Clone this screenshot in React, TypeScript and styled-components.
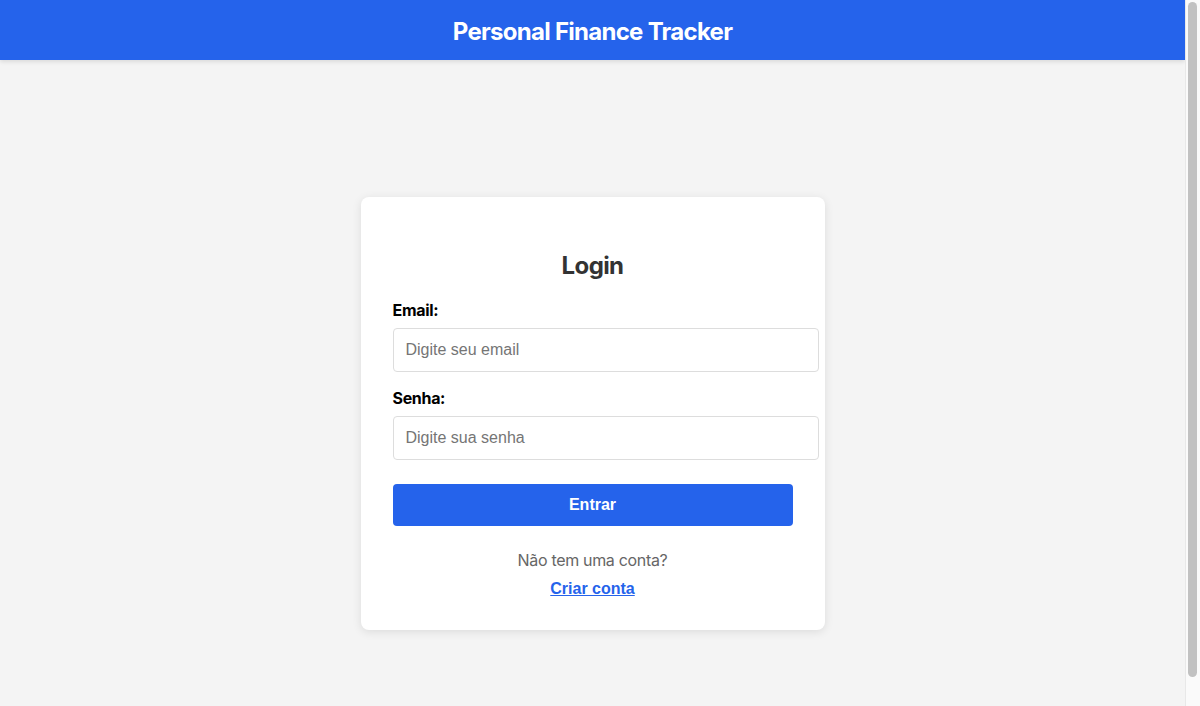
import styled, { createGlobalStyle } from 'styled-components'

const GlobalStyle = createGlobalStyle`
  body {
    margin: 0;
    background: #f4f4f4;
    font-family: Inter, "Noto Sans", sans-serif;
    letter-spacing: -0.02em;
  }
`

// the page is laid out beside a classic 15px scrollbar, as in the capture
const Page = styled.div`
  margin-right: 15px;
`

const ScrollTrack = styled.div`
  position: fixed;
  top: 0;
  right: 0;
  bottom: 0;
  width: 15px;
  box-sizing: border-box;
  background: #fafafa;
  border-left: 1px solid #e8e8e8;
  z-index: 20;
`

const ScrollThumb = styled.div`
  position: absolute;
  top: 2px;
  left: 2px;
  width: 9px;
  height: 675px;
  border-radius: 5px;
  background: #c1c1c1;
`

const Header = styled.header`
  background: #2563eb;
  color: #fff;
  padding: 17px 0 14px;
  text-align: center;
  box-shadow: 0 2px 4px rgba(0, 0, 0, 0.1);

  h1 {
    margin: 0;
    font-size: 24px;
    font-weight: 700;
    letter-spacing: -0.03em;
  }
`

const Main = styled.main`
  min-height: 100vh;
  display: flex;
  align-items: center;
  justify-content: center;
`

const Card = styled.div`
  width: 400px;
  padding: 32px;
  background: #fff;
  border-radius: 8px;
  box-shadow: 0 2px 10px rgba(0, 0, 0, 0.1);

  h2 {
    margin: 22px 0 20px;
    text-align: center;
    color: #333;
    font-size: 24px;
    letter-spacing: -0.025em;
  }
`

const Field = styled.div`
  margin-bottom: 16px;
`

const Label = styled.label`
  display: block;
  margin-bottom: 8px;
  font-weight: 700;
  color: #000;
`

const Input = styled.input`
  width: 100%;
  padding: 12px;
  border: 1px solid #ddd;
  border-radius: 4px;
  font-family: "Liberation Sans", Arial, sans-serif;
  font-size: 16px;
  letter-spacing: 0;
  outline: none;

  &::placeholder {
    color: #757575;
  }
`

const Submit = styled.button`
  display: block;
  width: 100%;
  margin-top: 24px;
  padding: 12px;
  border: none;
  border-radius: 4px;
  background: #2563eb;
  color: #fff;
  font-family: "Liberation Sans", Arial, sans-serif;
  font-size: 16px;
  font-weight: 700;
  cursor: pointer;
`

const Footer = styled.div`
  margin-top: 24px;
  text-align: center;

  p {
    margin: 0 0 8px;
    color: #666;
  }
`

const LinkButton = styled.button`
  background: none;
  border: none;
  padding: 0;
  color: #2563eb;
  font-family: "Liberation Sans", Arial, sans-serif;
  font-size: 16px;
  font-weight: 700;
  text-decoration: underline;
  cursor: pointer;
`

export default function App() {
  return (
    <>
      <GlobalStyle />
      <Page>
        <Header>
          <h1>Personal Finance Tracker</h1>
        </Header>
        <Main>
          <Card>
            <h2>Login</h2>
            <form onSubmit={(e) => e.preventDefault()}>
              <Field>
                <Label htmlFor="email">Email:</Label>
                <Input id="email" type="email" placeholder="Digite seu email" />
              </Field>
              <Field>
                <Label htmlFor="senha">Senha:</Label>
                <Input id="senha" type="password" placeholder="Digite sua senha" />
              </Field>
              <Submit type="submit">Entrar</Submit>
            </form>
            <Footer>
              <p>Não tem uma conta?</p>
              <LinkButton type="button">Criar conta</LinkButton>
            </Footer>
          </Card>
        </Main>
      </Page>
      <ScrollTrack>
        <ScrollThumb />
      </ScrollTrack>
    </>
  )
}
